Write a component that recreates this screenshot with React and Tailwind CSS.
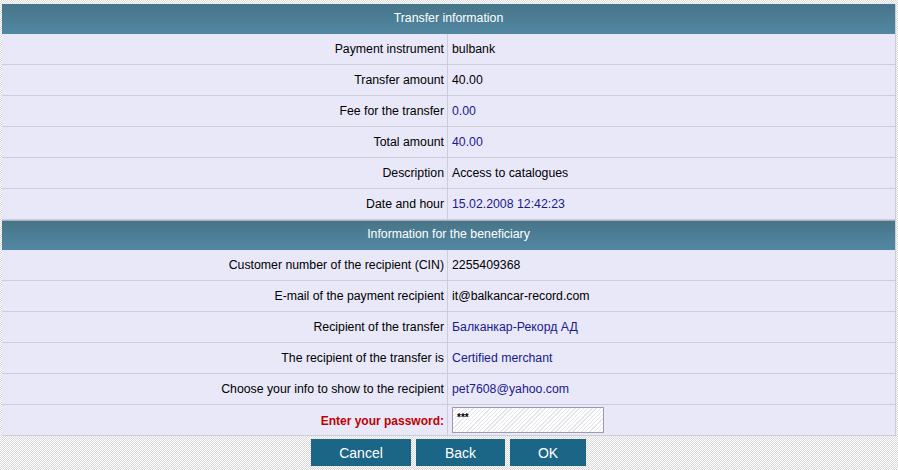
import React from "react";

const rows1 = [
  ["Payment instrument", "bulbank", false],
  ["Transfer amount", "40.00", false],
  ["Fee for the transfer", "0.00", true],
  ["Total amount", "40.00", true],
  ["Description", "Access to catalogues", false],
  ["Date and hour", "15.02.2008 12:42:23", true],
];
const rows2 = [
  ["Customer number of the recipient (CIN)", "2255409368", false],
  ["E-mail of the payment recipient", "it@balkancar-record.com", false],
  ["Recipient of the transfer", "Балканкар-Рекорд АД", true],
  ["The recipient of the transfer is", "Certified merchant", true],
  ["Choose your info to show to the recipient", "pet7608@yahoo.com", true],
];

function Header({ children, top }) {
  return (
    <div
      className={
        "h-[30px] flex items-center justify-center pb-[2px] text-white text-[12.3px] bg-gradient-to-b from-[#477589] to-[#5287a3] " +
        (top ? "border-t border-[#aab0bc]" : "")
      }
    >
      {children}
    </div>
  );
}

function Row({ label, value, blue }) {
  return (
    <div className="h-[31px] flex border-b border-[#cdcdd9] bg-[#e9e8f8] text-[12.3px]">
      <div className="w-[446px] shrink-0 flex items-center justify-end pr-[3px] pt-[1px] border-r border-[#cdcdd9] text-black">
        {label}
      </div>
      <div className={"flex items-center pl-[4px] pt-[1px] " + (blue ? "text-[#1a1a8c]" : "text-black")}>
        {value}
      </div>
    </div>
  );
}

export default function App() {
  return (
    <div
      className="w-[898px] h-[470px] pt-[4px] bg-[repeating-conic-gradient(#d8d8d8_0_25%,#ffffff_0_50%)] bg-[length:2px_2px]"
      style={{ fontFamily: '"Liberation Sans", Arial, sans-serif' }}
    >
      <div className="ml-[2px] w-[894px] border-r border-[#cdcdd9]">
        <Header>Transfer information</Header>
        {rows1.map((r) => (
          <Row key={r[0]} label={r[0]} value={r[1]} blue={r[2]} />
        ))}
        <Header top>Information for the beneficiary</Header>
        {rows2.map((r) => (
          <Row key={r[0]} label={r[0]} value={r[1]} blue={r[2]} />
        ))}
        <div className="h-[31px] flex bg-[#e9e8f8] border-b border-[#cdcdd9]">
          <div className="w-[446px] shrink-0 flex items-center justify-end pr-[3px] pt-[1px] border-r border-[#cdcdd9] text-[#c00000] font-bold text-[12px]">
            Enter your password:
          </div>
          <div className="flex items-center pl-[4px]">
            <div className="w-[152px] h-[26px] border border-[#9c9cb0] bg-[repeating-linear-gradient(135deg,#ffffff_0_2px,#e4e4ea_2px_3px)] flex items-start pl-[4px] pt-[5px] text-[10px] leading-[10px] font-bold text-black">
              ***
            </div>
          </div>
        </div>
      </div>
      <div className="flex justify-start mt-[3px] ml-[311px] gap-[5px]">
        {[
          ["Cancel", "w-[100px]"],
          ["Back", "w-[89px]"],
          ["OK", "w-[76px]"],
        ].map(([t, w]) => (
          <div
            key={t}
            className={w + " h-[27px] pt-[2px] bg-[#1b6686] text-white text-[14px] flex items-center justify-center"}
          >
            {t}
          </div>
        ))}
      </div>
    </div>
  );
}
